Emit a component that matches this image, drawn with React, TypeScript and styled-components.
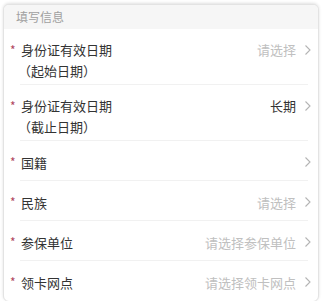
import styled, { createGlobalStyle } from "styled-components";

const GlobalStyle = createGlobalStyle`
  body {
    margin: 0;
    background: #ffffff;
    font-family: "Noto Sans CJK SC", "Noto Sans", sans-serif;
  }
`;

type Field = {
  label: string;
  sub?: string;
  value: string;
  filled?: boolean;
};

const fields: Field[] = [
  { label: "身份证有效日期", sub: "（起始日期）", value: "请选择" },
  { label: "身份证有效日期", sub: "（截止日期）", value: "长期", filled: true },
  { label: "国籍", value: "" },
  { label: "民族", value: "请选择" },
  { label: "参保单位", value: "请选择参保单位" },
  { label: "领卡网点", value: "请选择领卡网点" },
];

const Chevron = () => (
  <svg width="8" height="12" viewBox="0 0 8 12" fill="none">
    <path d="M1.5 1.5L6 6l-4.5 4.5" stroke="#b4b4b4" strokeWidth="1.1" />
  </svg>
);

const App = () => {
  return (
    <>
      <GlobalStyle />
      <Page>
        <Card>
          <Header>填写信息</Header>
          {fields.map((f, i) => (
            <Row key={i} $tall={!!f.sub} $last={i === fields.length - 1}>
              <Star>*</Star>
              <Label>
                <span>{f.label}</span>
                {f.sub && <SubLabel>{f.sub}</SubLabel>}
              </Label>
              <Value $filled={!!f.filled}>{f.value}</Value>
              <Chevron />
            </Row>
          ))}
        </Card>
      </Page>
    </>
  );
};

const Page = styled.div`
  padding: 4px 7px 0 3px;
  height: 301px;
  box-sizing: border-box;
  overflow: hidden;
`;

const Card = styled.div`
  border: 1px solid #e3e3e3;
  border-radius: 6px;
  background: #ffffff;
  box-shadow: 0 -1px 3px rgba(0, 0, 0, 0.12);
  overflow: hidden;
`;

const Header = styled.div`
  height: 24px;
  background: #f6f6f6;
  color: #a0a0a0;
  font-size: 12px;
  line-height: 24px;
  padding-left: 12px;
`;

const Row = styled.div<{ $tall: boolean; $last: boolean }>`
  display: flex;
  align-items: ${(p) => (p.$tall ? "flex-start" : "center")};
  height: ${(p) => (p.$tall ? "56px" : "40px")};
  box-sizing: border-box;
  padding: ${(p) => (p.$tall ? "10px 6px 0 4px" : "2px 6px 0 4px")};
  position: relative;
  &::after {
    content: "";
    display: ${(p) => (p.$last ? "none" : "block")};
    position: absolute;
    left: 16px;
    right: 10px;
    bottom: 0;
    height: 1px;
    background: #f1f1f1;
  }
  svg {
    margin-top: ${(p) => (p.$tall ? "5px" : "0")};
    flex-shrink: 0;
  }
`;

const Star = styled.span`
  color: #b04660;
  font-size: 12px;
  width: 13px;
  padding-left: 2px;
  box-sizing: border-box;
  line-height: 22px;
`;

const Label = styled.div`
  flex: 1;
  display: flex;
  flex-direction: column;
  color: #333333;
  font-size: 13px;
  line-height: 21px;
`;

const SubLabel = styled.span`
  margin-left: -3px;
`;

const Value = styled.span<{ $filled: boolean }>`
  color: ${(p) => (p.$filled ? "#333333" : "#c0c0c0")};
  font-size: 13px;
  line-height: 21px;
  margin-right: 8px;
`;

export default App;
